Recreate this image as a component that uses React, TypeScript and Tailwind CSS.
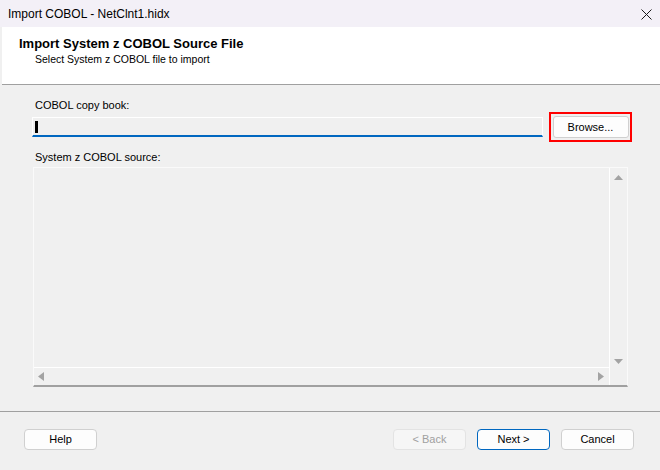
import React from "react";

const font = { fontFamily: '"Liberation Sans", Arial, sans-serif' };

function WinButton({ label, variant }: { label: string; variant?: "default" | "primary" | "disabled" }) {
  const look =
    variant === "primary"
      ? "border-[#0067c0] bg-[#fdfdfd] text-black"
      : variant === "disabled"
      ? "border-[#e3e3e3] bg-[#f6f6f6] text-[#a0a0a0]"
      : "border-[#d0d0d0] bg-[#fdfdfd] text-black";
  return (
    <button className={`h-[21px] w-[73px] rounded-[4px] border text-[11px] leading-none ${look}`}>{label}</button>
  );
}

export default function App() {
  return (
    <div className="w-[660px] h-[470px] bg-[#f0f0f0] flex flex-col overflow-hidden" style={font}>
      {/* title bar */}
      <div className="h-[27px] bg-[#f3f0f7] flex items-center justify-between pl-2 pr-[8px] shrink-0">
        <span className="text-[12px] text-black leading-none">Import COBOL - NetClnt1.hidx</span>
        <svg width="11" height="11" viewBox="0 0 11 11" className="mt-[1px]">
          <path d="M0.5 0.5 L10.5 10.5 M10.5 0.5 L0.5 10.5" stroke="#1a1a1a" strokeWidth="1" />
        </svg>
      </div>

      {/* header */}
      <div className="ml-[2px] h-[58px] bg-white border-b border-[#a0a0a0] pl-[17px] pt-[9px] shrink-0">
        <div className="text-[13px] font-bold text-black leading-[16px]">Import System z COBOL Source File</div>
        <div className="ml-[16px] text-[10.5px] text-black leading-[13px] mt-[1px]">Select System z COBOL file to import</div>
      </div>

      {/* body */}
      <div className="flex-1 pl-[32px] pt-[14px]">
        <div className="pl-[3px] text-[11px] leading-[13px] text-black">COBOL copy book:</div>
        <div className="flex items-center h-[30px]">
          <div className="w-[511px] h-[20px] border border-white border-b-2 border-b-[#0067c0] bg-[#f0f0f0] flex items-center pl-[2px]">
            <div className="w-[3px] h-[12px] bg-black" />
          </div>
          <div className="ml-[6px] w-[83px] h-[30px] border-2 border-[#ff0000] flex items-center justify-center">
            <button className="w-[76px] h-[22px] rounded-[3px] border border-[#d0d0d0] bg-[#fdfdfd] text-[11px] leading-none text-black">
              Browse...
            </button>
          </div>
        </div>
        <div className="mt-[9px] pl-[3px] text-[11px] leading-[13px] text-black">System z COBOL source:</div>
        <div className="mt-[3px] ml-[1px] w-[595px] h-[220px] border border-[#fafafa] border-b-2 border-b-[#a0a0a0] grid grid-cols-[1fr_17px] grid-rows-[1fr_17px]">
          <div className="border-r border-b border-white" />
          <div className="flex flex-col items-center justify-between pt-[7px] pb-[4px]">
            <svg width="9" height="5" viewBox="0 0 9 5">
              <path d="M4.5 0 L9 5 L0 5 Z" fill="#a3a3a3" />
            </svg>
            <svg width="9" height="5" viewBox="0 0 9 5">
              <path d="M0 0 L9 0 L4.5 5 Z" fill="#a3a3a3" />
            </svg>
          </div>
          <div className="flex items-center justify-between pl-[4px] pr-[5px] border-r border-white">
            <svg width="6" height="9" viewBox="0 0 6 9">
              <path d="M6 0 L6 9 L0 4.5 Z" fill="#a3a3a3" />
            </svg>
            <svg width="6" height="9" viewBox="0 0 6 9">
              <path d="M0 0 L6 4.5 L0 9 Z" fill="#a3a3a3" />
            </svg>
          </div>
          <div />
        </div>
      </div>

      {/* footer */}
      <div className="h-[59px] border-t border-[#a0a0a0] pt-[17px] pl-[24px] pr-[26px] flex items-start shrink-0">
        <WinButton label="Help" />
        <div className="ml-auto flex gap-[11px]">
          <WinButton label="< Back" variant="disabled" />
          <WinButton label="Next >" variant="primary" />
          <WinButton label="Cancel" />
        </div>
      </div>
    </div>
  );
}
